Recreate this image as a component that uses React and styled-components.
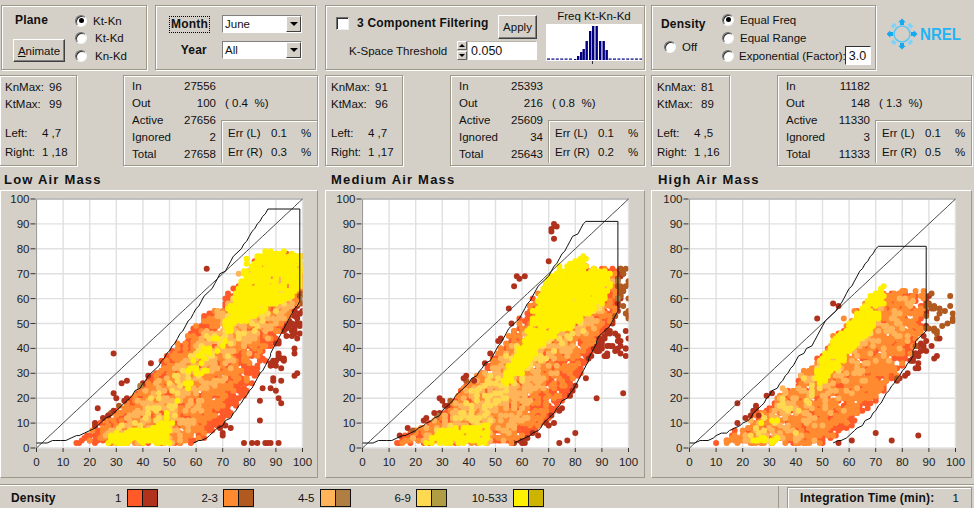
import React from "react"
import styled, { createGlobalStyle } from "styled-components"

const FACE = "#d4d0c8"
const GROOVE = "#9d9989"

const PAIRS = [
  ["#ff5a28", "#b0321c"],
  ["#ff8a30", "#b05a20"],
  ["#ffb45a", "#b07d42"],
  ["#ffd94f", "#b09c42"],
  ["#fff000", "#ccb400"],
]

const SPREAD = [2, 3, 3.5, 3, 1]

const GlobalStyle = createGlobalStyle`
  html, body { margin: 0; padding: 0; background: ${FACE}; }
  body { font-family: "Liberation Sans", Arial, sans-serif; font-size: 11.5px; color: #111; }
`

const Page = styled.div`
  width: 974px;
  height: 508px;
  overflow: hidden;
  background: ${FACE};
  display: flex;
  flex-direction: column;
`

const Columns = styled.div`
  display: grid;
  grid-template-columns: 325px 326px 323px;
  padding-top: 5px;
`

const Column = styled.div`
  padding-right: ${p => p.$pad}px;
  display: flex;
  flex-direction: column;
`

const Controls = styled.div`
  height: 65px;
  display: flex;
  gap: 8px;
  margin-bottom: 5px;
`

const GroupBox = styled.div`
  box-sizing: border-box;
  height: 65px;
  width: ${p => p.$width}px;
  margin-left: ${p => p.$left || 0}px;
  border: 1px solid ${GROOVE};
  box-shadow: 1px 1px 0 #fff, inset 1px 1px 0 #fff;
  display: flex;
`

const Bold = styled.div`
  font-weight: bold;
  font-size: 12px;
  letter-spacing: 0.2px;
`

const PlaneLeft = styled.div`
  width: 73px;
  padding: 7px 0 0 11px;
  box-sizing: border-box;
`

const PlaneLabel = styled(Bold)`
  margin: 0 0 12px 2px;
`

const Button = styled.div`
  box-sizing: border-box;
  width: ${p => p.$w}px;
  height: ${p => p.$h}px;
  margin-top: ${p => p.$top || 0}px;
  display: flex;
  align-items: center;
  justify-content: center;
  background: ${FACE};
  border: 1px solid;
  border-color: #fff #404040 #404040 #fff;
  box-shadow: inset -1px -1px 0 #808080;
  u { text-decoration: underline; }
`

const RadioCol = styled.div`
  padding-top: ${p => p.$top}px;
  display: flex;
  flex-direction: column;
  gap: ${p => p.$gap}px;
`

const RadioRow = styled.div`
  height: 13px;
  display: flex;
  align-items: center;
  gap: ${p => p.$gap || 6}px;
  white-space: nowrap;
`

const Radio = styled.span`
  box-sizing: border-box;
  flex: none;
  width: 12px;
  height: 12px;
  border-radius: 50%;
  background: #fff;
  border: 1px solid;
  border-color: #707070 #f4f4f4 #f4f4f4 #707070;
  box-shadow: inset 1px 1px 0 #303030;
  display: flex;
  align-items: center;
  justify-content: center;
  &::after {
    content: "";
    width: 5px;
    height: 5px;
    border-radius: 50%;
    background: ${p => (p.$on ? "#000" : "transparent")};
  }
`

const DateGrid = styled.div`
  display: grid;
  grid-template-columns: 52px 80px;
  grid-auto-rows: 18px;
  row-gap: 8px;
  padding: 9px 0 0 14px;
`

const FocusLabel = styled(Bold)`
  justify-self: ${p => (p.$focus ? "start" : "end")};
  margin-right: ${p => (p.$focus ? 0 : 14)}px;
  line-height: 15px;
  padding: 0 1px;
  align-self: center;
  outline: ${p => (p.$focus ? "1px dotted #000" : "none")};
`

const Combo = styled.div`
  box-sizing: border-box;
  width: 80px;
  height: 18px;
  background: #fff;
  border: 1px solid;
  border-color: #808080 #fff #fff #808080;
  display: flex;
  align-items: center;
  padding-left: 2px;
  justify-content: space-between;
`

const ComboArrow = styled.span`
  box-sizing: border-box;
  width: 15px;
  height: 16px;
  background: ${FACE};
  border: 1px solid;
  border-color: #fff #404040 #404040 #fff;
  display: flex;
  align-items: center;
  justify-content: center;
  &::after {
    content: "";
    border: 4px solid transparent;
    border-top: 4px solid #000;
    border-bottom: 0;
  }
`

const FilterLeft = styled.div`
  width: 218px;
  padding: 7px 0 0 10px;
  box-sizing: border-box;
`

const FilterTop = styled.div`
  height: 27px;
  display: flex;
  align-items: flex-start;
`

const Check = styled.span`
  box-sizing: border-box;
  width: 13px;
  height: 13px;
  margin: 4px 8px 0 0;
  background: #fff;
  border: 1px solid;
  border-color: #707070 #eee #eee #707070;
  box-shadow: inset 1px 1px 0 #303030;
`

const FilterTitle = styled(Bold)`
  margin-top: 3px;
  white-space: nowrap;
  flex: none;
  width: 141px;
`

const ThresholdRow = styled.div`
  display: flex;
  align-items: center;
  margin-top: 1px;
  padding-left: 13px;
`

const ThresholdLabel = styled.span`
  width: 108px;
  white-space: nowrap;
`

const Spinner = styled.span`
  width: 10px;
  height: 19px;
  display: flex;
  flex-direction: column;
  gap: 1px;
`

const SpinPart = styled.span`
  flex: 1;
  background: ${FACE};
  border: 1px solid;
  border-color: #fff #606060 #606060 #fff;
  display: flex;
  align-items: center;
  justify-content: center;
  &::after {
    content: "";
    border: 3px solid transparent;
    ${p => (p.$up ? "border-bottom: 3px solid #000; border-top: 0;" : "border-top: 3px solid #000; border-bottom: 0;")}
  }
`

const TextField = styled.div`
  box-sizing: border-box;
  width: ${p => p.$w}px;
  height: ${p => p.$h}px;
  margin-left: ${p => p.$left || 0}px;
  background: #fff;
  border: 1px solid;
  border-color: ${p => (p.$dark ? "#303030 #fff #fff #303030" : "#b8b4aa #fff #fff #b8b4aa")};
  padding: 0 3px;
  display: flex;
  align-items: center;
  font-size: 12.5px;
`

const HistCol = styled.div`
  margin-left: 2px;
  width: 96px;
  display: flex;
  flex-direction: column;
  align-items: center;
  padding-top: 4px;
`

const HistTitle = styled.div`
  height: 13px;
  line-height: 13px;
  white-space: nowrap;
`

const Histogram = styled.svg`
  display: block;
  margin-top: 1px;
`

const DensityLeft = styled.div`
  width: 70px;
  padding: 11px 0 0 9px;
  box-sizing: border-box;
`

const DensityLabel = styled(Bold)`
  margin-bottom: 9px;
`

const OffRow = styled(RadioRow)`
  padding-left: 3px;
`

const ExpRow = styled(RadioRow)`
  gap: 5px;
`

const Logo = styled.svg`
  display: block;
  margin: 12px 0 0 3px;
  flex: none;
`

const StatsRow = styled.div`
  height: 92px;
  display: flex;
  justify-content: space-between;
`

const KBox = styled.div`
  box-sizing: border-box;
  width: ${p => p.$w}px;
  margin-left: ${p => p.$left}px;
  height: 91px;
  border: 1px solid ${GROOVE};
  box-shadow: 1px 1px 0 #fff, inset 1px 1px 0 #fff;
  padding: 3px 0 0 5px;
`

const KRow = styled.div`
  display: grid;
  grid-template-columns: ${p => p.$label}px auto;
  height: 17px;
  line-height: 17px;
  margin-top: ${p => p.$gap || 0}px;
`

const StatBox = styled.div`
  box-sizing: border-box;
  width: ${p => p.$w}px;
  height: 91px;
  border: 1px solid ${GROOVE};
  box-shadow: 1px 1px 0 #fff, inset 1px 1px 0 #fff;
  padding: 2px 0 0 8px;
  display: grid;
  grid-template-columns: 50px 34px 1fr;
  grid-auto-rows: 17px;
  line-height: 17px;
`

const StatValue = styled.span`
  text-align: right;
`

const StatNote = styled.span`
  padding-left: 9px;
  white-space: pre;
`

const ErrBox = styled.div`
  grid-column: 3;
  grid-row: 3 / 6;
  margin: 8px 0 0 5px;
  border: 1px solid ${GROOVE};
  border-right: 0;
  border-bottom: 0;
  box-shadow: inset 1px 1px 0 #fff;
  padding: 3px 0 0 6px;
`

const ErrRow = styled.div`
  display: grid;
  grid-template-columns: 43px 30px auto;
  height: 19px;
  line-height: 19px;
`

const PanelTitle = styled.div`
  height: 23px;
  line-height: 25px;
  font-weight: bold;
  font-size: 13px;
  letter-spacing: 1.2px;
  padding-left: ${p => p.$left}px;
`

const PlotPanel = styled.div`
  box-sizing: border-box;
  height: 288px;
  border: 1px solid;
  border-color: #fff ${GROOVE} ${GROOVE} #fff;
  padding-left: ${p => p.$left}px;
`

const PlotSvg = styled.svg`
  display: block;
  font-family: "Liberation Sans", Arial, sans-serif;
  font-size: 11.5px;
`

const BottomRule = styled.div`
  margin-top: 6px;
  border-top: 1px solid ${GROOVE};
  border-bottom: 1px solid #fff;
`

const BottomBar = styled.div`
  flex: 1;
  display: flex;
  gap: 8px;
`

const LegendBar = styled.div`
  width: 779px;
  padding: 2px 0 0 11px;
  box-sizing: border-box;
  border-right: 1px solid ${GROOVE};
  display: flex;
  align-items: center;
`

const LegendTitle = styled(Bold)`
  width: 50px;
`

const LegendItem = styled.div`
  width: 96.5px;
  display: flex;
  justify-content: flex-end;
  align-items: center;
  gap: 5px;
`

const Swatches = styled.span`
  box-sizing: border-box;
  display: flex;
  width: 31px;
  height: 18px;
  border: 1px solid #111;
`

const Swatch = styled.span`
  flex: 1;
  background: ${p => p.$color};
  & + & { border-left: 1px solid #111; }
`

const TimeBox = styled.div`
  box-sizing: border-box;
  width: 185px;
  margin-top: 1px;
  border: 1px solid ${GROOVE};
  border-bottom: 0;
  box-shadow: inset 1px 1px 0 #fff;
  padding: 0 12px;
  display: flex;
  align-items: center;
  justify-content: space-between;
`

// helpers for the scatter clouds, coordinates are data units (0-100)
const W = 266
const H = 249
const OX = 35.5
const OY = 8
const sx = v => OX + (v * W) / 100
const sy = v => OY + H - (v * H) / 100

const rng = seed => () => {
  seed |= 0
  seed = (seed + 0x6d2b79f5) | 0
  let t = Math.imul(seed ^ (seed >>> 15), 1 | seed)
  t = (t + Math.imul(t ^ (t >>> 7), 61 | t)) ^ t
  return ((t ^ (t >>> 14)) >>> 0) / 4294967296
}

const inside = (pt, poly) => {
  let hit = false
  for (let i = 0, j = poly.length - 1; i < poly.length; j = i++) {
    const [xi, yi] = poly[i]
    const [xj, yj] = poly[j]
    if (yi > pt[1] !== yj > pt[1] && pt[0] < ((xj - xi) * (pt[1] - yi)) / (yj - yi) + xi) hit = !hit
  }
  return hit
}

const area = poly =>
  Math.abs(poly.reduce((s, p, i) => {
    const q = poly[(i + 1) % poly.length]
    return s + p[0] * q[1] - q[0] * p[1]
  }, 0)) / 2

const dot = ([x, y]) => {
  const r = 3
  return `M${(sx(x) - r).toFixed(1)} ${sy(y).toFixed(1)}a${r} ${r} 0 1 0 ${2 * r} 0a${r} ${r} 0 1 0 ${-2 * r} 0`
}

// the data sit on whole numbers, so the limit curves come out as small stairs
const stairs = points => {
  const out = []
  points.forEach((p, i) => {
    const q = points[i + 1]
    if (!q) return out.push(p)
    const steps = Math.max(1, Math.round(Math.hypot(q[0] - p[0], q[1] - p[1]) / 2))
    const straight = p[0] === q[0] || p[1] === q[1]
    for (let s = 0; s < (straight ? 1 : steps); s++) {
      const x = p[0] + ((q[0] - p[0]) * s) / steps
      const y = p[1] + ((q[1] - p[1]) * s) / steps
      out.push(straight ? p : [Math.round(x), Math.round(y)])
    }
  })
  return out.map(([x, y]) => `${sx(x).toFixed(1)},${sy(y).toFixed(1)}`).join(" ")
}

const scatter = (plot, seed) => {
  const rand = rng(seed)
  const layers = []
  plot.bands.forEach(([pair, density, poly]) => {
    const bright = []
    const dark = []
    const spread = SPREAD[pair]
    const xs = poly.map(p => p[0])
    const ys = poly.map(p => p[1])
    const [x0, x1, y0, y1] = [Math.min(...xs), Math.max(...xs), Math.min(...ys), Math.max(...ys)]
    const n = Math.round((area(poly) * density) / 4)
    let made = 0
    let guard = 0
    while (made < n && guard < n * 40) {
      guard++
      const pt = [x0 + rand() * (x1 - x0), y0 + rand() * (y1 - y0)]
      if (!inside(pt, poly)) continue
      made++
      const wobble = pt[1] < 5 ? 0.3 : 1
      pt[0] = Math.min(100, Math.round(pt[0] + (rand() + rand() - 1) * spread * wobble))
      pt[1] = Math.max(2, Math.round(pt[1] + (rand() + rand() - 1) * spread * wobble))
      if (inside(pt, plot.limit) || pair === 4 || pt[1] > plot.top) bright.push(dot(pt))
      else dark.push(dot(pt))
    }
    layers.push({ color: PAIRS[pair][0], d: bright.join("") })
    layers.push({ color: PAIRS[pair][1], d: dark.join("") })
  })
  layers.push({ color: PAIRS[0][1], d: plot.strays.map(dot).join("") })
  return layers
}

const PLOTS = [
  {
    title: "Low Air Mass",
    top: 62,
    limit: [[0,2],[11,3],[20,7],[29,14],[35,20],[41,27],[47,35],[50,39],[56,49],[62,59],[67,66],[73,75],[80,85],[84,91],[87,96],[99,96],[99,59],[96,54],[92,46],[90,42],[86,33],[82,26],[77,18],[73,12],[68,8],[64,4],[59,2]],
    bands: [
      [0, 2.6, [[14,2],[60,2],[66,5],[73,13],[80,26],[84,35],[90,45],[97,53],[100,60],[100,76],[88,78],[80,72],[73,62],[65,54],[58,46],[50,37],[42,27],[33,16],[22,8]]],
      [0, 0.35, [[76,24],[88,24],[94,34],[100,48],[100,60],[90,45]]],
      [0, 0.7, [[86,32],[92,34],[97,42],[100,50],[100,60],[92,46]]],
      [1, 1.6, [[18,2],[58,2],[62,7],[70,17],[77,28],[83,38],[90,47],[97,55],[100,62],[100,74],[82,74],[74,60],[65,52],[56,42],[48,33],[40,24],[30,14]]],
      [2, 0.95, [[22,2],[56,2],[58,8],[62,20],[72,33],[82,43],[92,51],[100,62],[100,74],[78,70],[72,56],[62,45],[52,34],[42,23],[32,12]]],
      [3, 0.5, [[24,3],[48,3],[52,12],[55,25],[60,30],[70,37],[82,47],[95,60],[100,72],[80,70],[72,54],[62,42],[50,28],[38,15]]],
      [4, 4, [[23,2],[50,2],[49,10],[30,6]]],
      [4, 0.5, [[46,9],[52,9],[54,22],[50,18]]],
      [4, 0.8, [[56,24],[62,28],[72,42],[74,50],[64,44],[57,34]]],
      [4, 4, [[70,47],[76,50],[85,55],[94,60],[100,65],[100,77],[88,79],[79,75],[76,64],[72,55]]],
    ],
    strays: [[64,72],[29,38],[43,34],[32,26],[34,27],[29,22],[30,20],[23,16],[29,15],[27,13],[25,12],[22,10],[22,9],[33,19],[78,2],[81,2],[83,2],[86,2],[87,2],[88,2],[91,2],[84,11],[73,8],[70,5],[70,6],[84,19],[91,20],[92,18],[90,23],[88,24],[85,24],[92,27],[98,30],[97,29],[97,38],[98,44],[93,35]],
  },
  {
    title: "Medium Air Mass",
    top: 90,
    limit: [[0,2],[11,3],[18,6],[29,13],[36,22],[40,26],[49,37],[54,46],[60,54],[65,63],[71,71],[77,81],[83,90],[84,91],[96,91],[96,55],[93,49],[89,45],[86,38],[83,31],[79,23],[74,17],[67,8],[61,4],[57,2]],
    bands: [
      [0, 2.6, [[11,2],[60,2],[65,7],[72,12],[78,22],[84,36],[90,40],[94,48],[97,60],[98,72],[88,72],[84,74],[75,70],[68,64],[62,53],[55,44],[47,33],[38,22],[28,12],[18,6]]],
      [0, 0.5, [[86,35],[100,38],[100,55],[94,50]]],
      [1, 1.6, [[14,2],[57,2],[63,8],[70,15],[76,26],[84,40],[92,50],[96,62],[98,70],[88,71],[75,68],[66,60],[58,48],[48,34],[38,23],[28,12]]],
      [2, 1.2, [[18,2],[55,2],[58,10],[66,22],[74,36],[86,48],[93,56],[95,68],[85,70],[72,62],[62,48],[52,36],[42,25],[30,12]]],
      [3, 0.55, [[23,3],[45,3],[52,15],[60,26],[70,36],[82,46],[90,58],[92,66],[80,68],[66,50],[52,34],[40,21],[30,10]]],
      [1, 0.9, [[95,48],[100,52],[100,72],[97,72]]],
      [4, 4, [[23,2],[47,2],[47,9],[30,7]]],
      [4, 4, [[53,25],[60,30],[66,40],[72,46],[80,50],[92,60],[94,70],[84,72],[84,77],[75,74],[68,65],[64,52],[60,40],[55,32]]],
    ],
    strays: [[72,84],[71,88],[72,90],[73,89],[71,87],[59,68],[58,69],[61,69],[57,65],[55,56],[56,50],[52,44],[51,43],[48,38],[74,2],[77,3],[80,6],[88,20],[98,22],[84,28],[39,29],[38,28],[42,27],[29,20],[30,19],[31,17],[27,14],[24,12],[23,11],[17,8],[14,5],[61,2],[66,5],[70,9],[72,10],[74,15],[70,75],[90,40],[95,39],[97,38],[99,40],[92,38],[85,36],[86,37]],
  },
  {
    title: "High Air Mass",
    top: 100,
    limit: [[0,2],[7,3],[17,8],[23,12],[29,20],[35,27],[40,35],[47,43],[50,49],[57,58],[63,69],[68,77],[71,81],[89,81],[89,47],[85,43],[84,37],[81,32],[78,28],[73,20],[68,12],[63,8],[59,4],[54,2]],
    bands: [
      [0, 1.6, [[10,2],[50,2],[55,6],[65,12],[72,22],[80,30],[85,38],[89,48],[89,62],[78,62],[72,61],[65,56],[58,48],[48,36],[38,25],[28,14],[18,7]]],
      [0, 0.6, [[80,30],[88,33],[91,36],[89,48],[85,38]]],
      [1, 1.9, [[11,2],[48,2],[54,8],[65,16],[76,28],[84,40],[88,48],[88,62],[76,62],[68,60],[60,50],[50,38],[40,27],[30,16],[20,7]]],
      [2, 0.55, [[14,3],[46,3],[55,14],[68,30],[80,42],[86,54],[84,60],[72,60],[60,48],[46,33],[36,22],[26,12]]],
      [3, 0.3, [[20,3],[36,3],[48,20],[60,36],[72,50],[70,56],[56,44],[42,28],[30,14]]],
      [1, 0.65, [[90,42],[94,46],[100,50],[100,62],[90,63]]],
      [4, 2, [[22,2],[34,2],[34,4],[26,4]]],
      [4, 0.8, [[25,7],[34,11],[36,13],[28,10]]],
      [4, 4, [[47,24],[53,30],[63,42],[68,47],[73,57],[74,66],[72,65],[63,54],[50,38]]],
    ],
    strays: [[54,58],[48,52],[56,57],[18,18],[25,16],[25,17],[24,15],[29,21],[31,22],[18,10],[21,12],[23,13],[26,13],[61,3],[56,2],[70,6],[76,3],[86,5],[92,36],[93,37],[94,44],[86,34],[85,32],[82,30],[81,29],[83,35]],
  },
]

const HIST = [[28,1],[31,4],[34,8],[36.5,11],[39.5,19],[43,29],[46,34],[49.5,34],[53,19],[56.5,19],[59.5,10]]

const HistogramChart = () => {
  const dashes = []
  for (let x = 1; x < 96; x += 4.4) if (x < 27 || x > 62) dashes.push(x)
  return (
    <Histogram width="96" height="40" viewBox="0 0 96 40">
      <rect width="96" height="37" fill="#fff" />
      {dashes.map(x => <rect key={x} x={x} y="34.5" width="3" height="1.2" fill="#000080" />)}
      {HIST.map(([x, h]) => <rect key={x} x={x} y={36 - h} width="2.4" height={h} fill="#000080" />)}
      <rect x="46" y="37" width="1" height="3" fill="#333" />
    </Histogram>
  )
}

const NrelLogo = () => {
  const big = [0, 90, 180, 270]
  const small = [45, 135, 225, 315]
  return (
    <Logo width="76" height="34" viewBox="0 0 76 34">
      <circle cx="15" cy="17" r="8" fill="none" stroke="#5cc6f6" strokeWidth="1.6" />
      {big.map(a => (
        <path key={a} d="M15 1.5l3.8 3.8h-1.8v2.7h-4v-2.7h-1.8z" fill="#16a8f0" transform={`rotate(${a} 15 17)`} />
      ))}
      {small.map(a => (
        <rect key={a} x="12.5" y="3.5" width="5" height="3.5" fill="#7ed2f8" transform={`rotate(${a} 15 17)`} />
      ))}
      <text x="33" y="23" fontFamily="Liberation Sans, Arial, sans-serif" fontWeight="bold" fontSize="16" fill="#22b4f4" textLength="41" lengthAdjust="spacingAndGlyphs">NREL</text>
    </Logo>
  )
}

const TICKS = [0, 10, 20, 30, 40, 50, 60, 70, 80, 90, 100]

const Plot = ({ plot, seed }) => {
  const layers = React.useMemo(() => scatter(plot, seed), [plot, seed])
  const id = `clip${seed}`
  return (
    <PlotSvg width="312" height="285" viewBox="0 0 312 285">
      <clipPath id={id}><rect x={OX} y={OY} width={W} height={H} /></clipPath>
      <rect x={OX} y={OY} width={W} height={H} fill="#fff" />
      {TICKS.map(t => (
        <g key={t} stroke="#e0e0e0" strokeWidth="1.4">
          <line x1={sx(t)} y1={OY} x2={sx(t)} y2={OY + H} />
          <line x1={OX} y1={sy(t)} x2={OX + W} y2={sy(t)} />
        </g>
      ))}
      <path d={`M${OX} ${OY + H}V${OY}H${OX + W}`} fill="none" stroke="#9a9a9a" />
      <g clipPath={`url(#${id})`}>
        {layers.map((l, i) => <path key={i} d={l.d} fill={l.color} />)}
      </g>
      <polyline points={stairs([[0,0],[100,100]])} fill="none" stroke="#333" strokeWidth="0.9" />
      <polyline points={stairs(plot.limit)} fill="none" stroke="#111" strokeWidth="1" />
      {TICKS.map(t => (
        <g key={t}>
          <line x1={OX - 6} y1={sy(t)} x2={OX - 1} y2={sy(t)} stroke="#333" />
          <line x1={sx(t)} y1={OY + H} x2={sx(t)} y2={OY + H + 4} stroke="#333" />
          <text x={OX - 7} y={sy(t) + 4} textAnchor="end" fill="#222">{t}</text>
          <text x={sx(t)} y={OY + H + 18} textAnchor="middle" fill="#222">{t}</text>
        </g>
      ))}
    </PlotSvg>
  )
}

const StatsPanel = ({ s, kLeft, kWidth, statWidth }) => (
  <StatsRow>
    <KBox $w={kWidth} $left={kLeft}>
      <KRow $label={44}><span>KnMax:</span><span>{s.kn}</span></KRow>
      <KRow $label={44}><span>KtMax:</span><span>{s.kt}</span></KRow>
      <KRow $label={37} $gap={12}><span>Left:</span><span>{s.left}</span></KRow>
      <KRow $label={37} $gap={2}><span>Right:</span><span>{s.right}</span></KRow>
    </KBox>
    <StatBox $w={statWidth}>
      <span>In</span><StatValue>{s.in}</StatValue><span />
      <span>Out</span><StatValue>{s.out}</StatValue><StatNote>{`( ${s.pct}  %)`}</StatNote>
      <span>Active</span><StatValue>{s.active}</StatValue>
      <ErrBox>
        <ErrRow><span>Err (L)</span><span>{s.errL}</span><span>%</span></ErrRow>
        <ErrRow><span>Err (R)</span><span>{s.errR}</span><span>%</span></ErrRow>
      </ErrBox>
      <span>Ignored</span><StatValue>{s.ignored}</StatValue>
      <span>Total</span><StatValue>{s.total}</StatValue>
    </StatBox>
  </StatsRow>
)

const STATS = [
  { kn: 96, kt: 99, left: "4 ,7", right: "1 ,18", in: 27556, out: 100, pct: "0.4", active: 27656, ignored: 2, total: 27658, errL: "0.1", errR: "0.3" },
  { kn: 91, kt: 96, left: "4 ,7", right: "1 ,17", in: 25393, out: 216, pct: "0.8", active: 25609, ignored: 34, total: 25643, errL: "0.1", errR: "0.2" },
  { kn: 81, kt: 89, left: "4 ,5", right: "1 ,16", in: 11182, out: 148, pct: "1.3", active: 11330, ignored: 3, total: 11333, errL: "0.1", errR: "0.5" },
]

const LEGEND = ["1", "2-3", "4-5", "6-9", "10-533"]

const App = () => (
  <Page>
    <GlobalStyle />
    <Columns>
      <Column $pad={7}>
        <Controls>
          <GroupBox $width={146} $left={1}>
            <PlaneLeft>
              <PlaneLabel>Plane</PlaneLabel>
              <Button $w={52} $h={23}><span><u>A</u>nimate</span></Button>
            </PlaneLeft>
            <RadioCol $top={8} $gap={4.5}>
              <RadioRow><Radio $on /><span>Kt-Kn</span></RadioRow>
              <RadioRow $gap={8}><Radio /><span>Kt-Kd</span></RadioRow>
              <RadioRow $gap={8}><Radio /><span>Kn-Kd</span></RadioRow>
            </RadioCol>
          </GroupBox>
          <GroupBox $width={161}>
            <DateGrid>
              <FocusLabel $focus>Month</FocusLabel>
              <Combo>June<ComboArrow /></Combo>
              <FocusLabel>Year</FocusLabel>
              <Combo>All<ComboArrow /></Combo>
            </DateGrid>
          </GroupBox>
        </Controls>
        <StatsPanel s={STATS[0]} kLeft={-1} kWidth={78} statWidth={195} />
        <PanelTitle $left={4}>{PLOTS[0].title}</PanelTitle>
        <PlotPanel $left={0}><Plot plot={PLOTS[0]} seed={11} /></PlotPanel>
      </Column>
      <Column $pad={6}>
        <Controls>
          <GroupBox $width={320}>
            <FilterLeft>
              <FilterTop>
                <Check />
                <FilterTitle>3 Component Filtering</FilterTitle>
                <Button $w={39} $h={24} $top={2}>Apply</Button>
              </FilterTop>
              <ThresholdRow>
                <ThresholdLabel>K-Space Threshold</ThresholdLabel>
                <Spinner><SpinPart $up /><SpinPart /></Spinner>
                <TextField $w={70} $h={19}>0.050</TextField>
              </ThresholdRow>
            </FilterLeft>
            <HistCol>
              <HistTitle>Freq Kt-Kn-Kd</HistTitle>
              <HistogramChart />
            </HistCol>
          </GroupBox>
        </Controls>
        <StatsPanel s={STATS[1]} kLeft={0} kWidth={78} statWidth={195} />
        <PanelTitle $left={6}>{PLOTS[1].title}</PanelTitle>
        <PlotPanel $left={1}><Plot plot={PLOTS[1]} seed={22} /></PlotPanel>
      </Column>
      <Column $pad={2}>
        <Controls>
          <GroupBox $width={225}>
            <DensityLeft>
              <DensityLabel>Density</DensityLabel>
              <OffRow><Radio /><span>Off</span></OffRow>
            </DensityLeft>
            <RadioCol $top={7} $gap={5}>
              <RadioRow><Radio $on /><span>Equal Freq</span></RadioRow>
              <RadioRow><Radio /><span>Equal Range</span></RadioRow>
              <ExpRow>
                <Radio />
                <span>Exponential (Factor):</span>
                <TextField $w={26} $h={19} $dark $left={-6}>3.0</TextField>
              </ExpRow>
            </RadioCol>
          </GroupBox>
          <NrelLogo />
        </Controls>
        <StatsPanel s={STATS[2]} kLeft={0} kWidth={79} statWidth={195} />
        <PanelTitle $left={7}>{PLOTS[2].title}</PanelTitle>
        <PlotPanel $left={2}><Plot plot={PLOTS[2]} seed={33} /></PlotPanel>
      </Column>
    </Columns>
    <BottomRule />
    <BottomBar>
      <LegendBar>
        <LegendTitle>Density</LegendTitle>
        {LEGEND.map((l, i) => (
          <LegendItem key={l}>
            <span>{l}</span>
            <Swatches>
              <Swatch $color={PAIRS[i][0]} />
              <Swatch $color={PAIRS[i][1]} />
            </Swatches>
          </LegendItem>
        ))}
      </LegendBar>
      <TimeBox>
        <Bold>Integration Time (min):</Bold>
        <span>1</span>
      </TimeBox>
    </BottomBar>
  </Page>
)

export default App
